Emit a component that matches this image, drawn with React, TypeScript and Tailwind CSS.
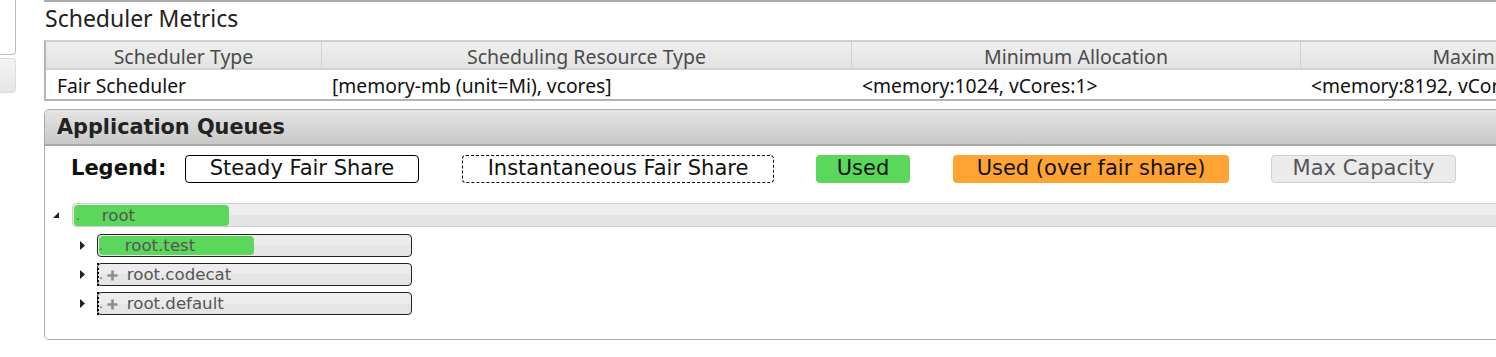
import React from "react";

const NOTO = { fontFamily: '"Noto Sans", "Open Sans", sans-serif' };
const DEJA = { fontFamily: '"DejaVu Sans", Verdana, sans-serif' };

function TriDown() {
  return (
    <svg width="6" height="6" viewBox="0 0 6 6" className="block">
      <polygon points="6,0 6,6 0,6" fill="#222" />
    </svg>
  );
}
function TriRight() {
  return (
    <svg width="5" height="9" viewBox="0 0 5 9" className="block">
      <polygon points="0,0 5,4.5 0,9" fill="#222" />
    </svg>
  );
}
function Plus() {
  return (
    <svg width="11" height="11" viewBox="0 0 11 11" className="block">
      <path d="M5.5 0.5V10.5M0.5 5.5H10.5" stroke="#8c8c8c" strokeWidth="2.6" />
    </svg>
  );
}

function ChildRow({ name, used }: { name: string; used?: boolean }) {
  return (
    <div className="flex items-center h-[23px]">
      <div className="w-[20px] flex justify-start pl-[3px]">
        <TriRight />
      </div>
      <div className="relative w-[315px] h-[23px] rounded-[4px] border border-[#222] bg-[linear-gradient(#ececec_50%,#e5e5e5_50%)] flex items-center pt-[2px] text-[16.6px] text-[#555]" style={DEJA}>
        {used ? (
          <div className="absolute left-[1px] top-[1px] bottom-[1px] w-[155px] rounded-[4px] bg-[#5bd75b]" />
        ) : (
          <div className="absolute left-[-1px] top-[-1px] bottom-[-1px] w-0 border-l-2 border-dotted border-black" />
        )}
        <span className="relative pl-[1px] text-[12px] self-end pb-[1px]">.</span>
        {used ? (
          <span className="relative ml-[22px] leading-none">{name}</span>
        ) : (
          <>
            <span className="relative ml-[4px]"><Plus /></span>
            <span className="relative ml-[9px] leading-none">{name}</span>
          </>
        )}
      </div>
    </div>
  );
}

export default function App() {
  const cols = [277, 530, 449, 452, 400];
  const heads = ["Scheduler Type", "Scheduling Resource Type", "Minimum Allocation", "Maximum Allocation", "Maximum Request"];
  const data = ["Fair Scheduler", "[memory-mb (unit=Mi), vcores]", "<memory:1024, vCores:1>", "<memory:8192, vCores:4>", ""];
  return (
    <div className="w-[1496px] h-[357px] overflow-hidden bg-white flex">
      <div className="w-[16px] shrink-0 flex flex-col">
        <div className="h-[55px] border-r border-b border-[#bbb] rounded-br-[4px]" />
        <div className="mt-[3px] h-[35px] border border-l-0 border-[#ddd] rounded-r-[4px] bg-linear-to-b from-[#f4f4f4] to-[#e6e6e6]" />
      </div>
      <div className="ml-[28px] w-[2200px] shrink-0 flex flex-col">
        <div className="h-[2px] bg-[#aaa]" />
        <div className="h-[38px] pl-[1px] text-[23px] leading-[32px] text-[#222]" style={NOTO}>
          Scheduler Metrics
        </div>
        <div className="border-2 border-[#b4b4b4] border-t-[#cfcfcf] w-fit" style={NOTO}>
          <div className="flex h-[28px] bg-linear-to-b from-[#efefef] to-[#e3e3e3] border-b-2 border-[#d4d4d4]">
            {heads.map((h, i) => (
              <div key={i} className={`flex items-center justify-center pt-[4px] text-[19.5px] text-[#4a4a4a] whitespace-nowrap ${i > 0 ? "border-l border-[#d2d2d2]" : ""}`} style={{ width: cols[i] - (i === 0 ? 2 : 0) }}>
                {h}
              </div>
            ))}
          </div>
          <div className="flex h-[29px] bg-white">
            {data.map((d, i) => (
              <div key={i} className="flex items-center pl-[11px] pt-[4px] text-[19.3px] text-[#111] whitespace-nowrap" style={{ width: cols[i] - (i === 0 ? 2 : 0) }}>
                {d}
              </div>
            ))}
          </div>
        </div>
        <div className="mt-[8px] h-[231px] border border-[#aaa] rounded-[5px] flex flex-col">
          <div className="h-[36px] rounded-t-[5px] bg-linear-to-b from-[#e4e4e4] to-[#c8c8c8] border-b-2 border-[#a8a8a8] flex items-center pl-[12px] pt-[2px] text-[20.8px] font-bold text-[#222]" style={DEJA}>
            Application Queues
          </div>
          <div className="mt-[8px] flex items-center h-[28px] pl-[26px] pt-[1px] text-[21px] text-[#111]" style={DEJA}>
            <div className="w-[114px] font-bold">Legend:</div>
            <div className="w-[234px] h-[28px] border border-black rounded-[4px] flex items-center justify-center">Steady Fair Share</div>
            <div className="ml-[43px] w-[312px] h-[28px] border border-dashed border-black rounded-[4px] flex items-center justify-center">Instantaneous Fair Share</div>
            <div className="ml-[42px] w-[94px] h-[28px] bg-[#5bd75b] rounded-[4px] flex items-center justify-center">Used</div>
            <div className="ml-[43px] w-[276px] h-[28px] bg-[#ffa333] rounded-[4px] flex items-center justify-center">Used (over fair share)</div>
            <div className="ml-[42px] w-[185px] h-[28px] bg-[#ebebeb] border border-[#cfcfcf] rounded-[4px] flex items-center justify-center text-[#555]">Max Capacity</div>
          </div>
          <div className="mt-[21px] pl-[4px] flex flex-col">
            <div className="flex items-center h-[24px]">
              <div className="w-[23px] pl-[4px] flex"><TriDown /></div>
              <div className="relative flex-1 h-[24px] rounded-[4px] border border-[#cdcdcd] bg-[linear-gradient(#ededed_50%,#e4e4e4_50%)] flex items-center pt-[2px] text-[16.6px] text-[#555]" style={DEJA}>
                <div className="absolute left-[1px] top-[1px] bottom-[0px] w-[155px] rounded-[4px] bg-[#5bd75b]" />
                <span className="relative pl-[3px] text-[12px] self-end pb-[1px]">.</span>
                <span className="relative ml-[22px] leading-none">root</span>
              </div>
            </div>
            <div className="ml-[28px] mt-[7px] flex flex-col gap-[6px]">
              <ChildRow name="root.test" used />
              <ChildRow name="root.codecat" />
              <ChildRow name="root.default" />
            </div>
          </div>
        </div>
      </div>
    </div>
  );
}
